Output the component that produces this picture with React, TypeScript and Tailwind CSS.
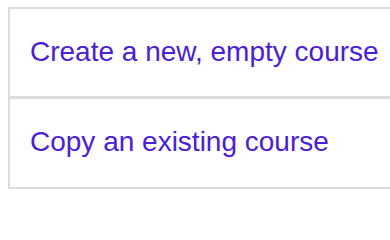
const options = ['Create a new, empty course', 'Copy an existing course'];

export default function App() {
  return (
    <div className="h-[200px] w-[390px] overflow-hidden bg-white pl-[8px] pt-[7px] font-['Liberation_Sans',Arial,sans-serif]">
      <ul className="border-y-2 border-l-2 border-[#dcdcdc]">
        {options.map((label, i) => (
          <li
            key={label}
            className={
              i === 0
                ? 'border-b-[3px] border-[#dcdcdc] pb-[29px] pl-[20px] pt-[27px]'
                : 'pb-[30px] pl-[20px] pt-[27px]'
            }
          >
            <a href="#" className="block text-[28px] leading-[31px] text-[#4a20d4]">
              {label}
            </a>
          </li>
        ))}
      </ul>
    </div>
  );
}
